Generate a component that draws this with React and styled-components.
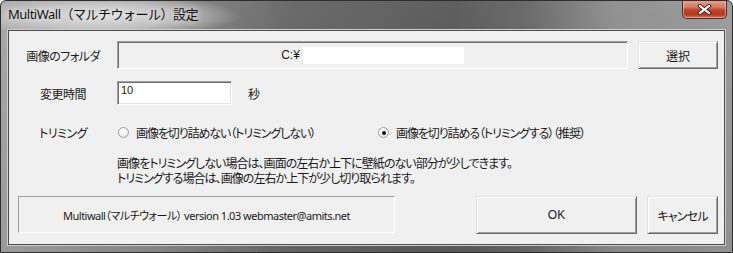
import React from 'react'
import styled, { createGlobalStyle } from 'styled-components';

const GlobalStyle = createGlobalStyle`
  body {
    margin: 0;
    background: #ffffff;
  }
`;

const jpFont = `"Liberation Sans", "Noto Sans CJK JP", sans-serif`;

const App = () => {
  return (
    <>
      <GlobalStyle />
      <Window>
        <TitleBar>
          <Title>MultiWall（マルチウォール）設定</Title>
          <CloseButton>
            <svg width="15" height="11" viewBox="0 0 15 11">
              <path d="M3 2 L12 9 M12 2 L3 9" stroke="#3a1a14" strokeWidth="4" strokeLinecap="square" />
              <path d="M3 2 L12 9 M12 2 L3 9" stroke="#ffffff" strokeWidth="2.2" strokeLinecap="square" />
            </svg>
          </CloseButton>
        </TitleBar>
        <Client>
          <Row $top={10}>
            <Label>画像のフォルダ</Label>
            <FolderField>
              <span>C:¥</span>
              <Blank />
            </FolderField>
            <Button $width={80} $height={28}>選択</Button>
          </Row>
          <Row $top={12}>
            <Label>変更時間</Label>
            <TextInput>10</TextInput>
            <Unit>秒</Unit>
          </Row>
          <Row $top={19}>
            <Label>トリミング</Label>
            <RadioOption $width={260}>
              <Radio />
              画像を切り詰めない（トリミングしない）
            </RadioOption>
            <RadioOption>
              <Radio $checked />
              画像を切り詰める（トリミングする）（推奨）
            </RadioOption>
          </Row>
          <Note>
            画像をトリミングしない場合は、画面の左右か上下に壁紙のない部分が少しできます。<br />
            トリミングする場合は、画像の左右か上下が少し切り取られます。
          </Note>
          <Footer>
            <Status>Multiwall（マルチウォール） version 1.03 webmaster@amits.net</Status>
            <Button $width={161} $height={38} $left="auto">OK</Button>
            <Button $width={71} $height={38} $left="10px" $spacing={-0.8}>キャンセル</Button>
          </Footer>
        </Client>
      </Window>
    </>
  )
}

export default App;

const Window = styled.div`
  width: 733px;
  height: 253px;
  box-sizing: border-box;
  border: 1px solid #2e2e2e;
  border-radius: 6px 6px 0 0;
  background:
    linear-gradient(to bottom, rgba(255,255,255,0) 0, rgba(0,0,0,0.08) 100%),
    linear-gradient(to right, #a8a8a8 0%, #8e8e8e 22%, #6a6a6a 40%, #5e5e5e 62%, #6c6c6c 72%, #929292 84%, #9c9c9c 100%);
  display: flex;
  flex-direction: column;
  overflow: hidden;
`;

const TitleBar = styled.div`
  height: 28px;
  display: flex;
  align-items: center;
  padding-left: 7px;
  background: radial-gradient(ellipse 140px 22px at 100px 15px, rgba(225,225,225,0.95) 0%, rgba(215,215,215,0.7) 55%, rgba(200,200,200,0) 100%);
`;

const Title = styled.div`
  font-family: "Noto Sans", "Noto Sans CJK JP", sans-serif;
  font-size: 13px;
  color: #111;
  letter-spacing: -0.5px;
  margin-top: -3px;
  text-shadow: 0 0 6px rgba(255,255,255,0.9);
`;

const CloseButton = styled.div`
  align-self: flex-start;
  margin-left: auto;
  margin-right: 5px;
  margin-top: -1px;
  width: 45px;
  height: 19px;
  box-sizing: border-box;
  border: 1px solid #4a2a25;
  border-top: none;
  border-radius: 0 0 5px 5px;
  background: linear-gradient(to bottom, #e6a596 0%, #d47a66 40%, #c2452b 55%, #b8391f 80%, #d0705a 100%);
  box-shadow: inset 0 0 0 1px rgba(255,220,210,0.5);
  display: flex;
  align-items: center;
  justify-content: center;
`;

const Client = styled.div`
  flex: 1;
  margin: 1px 7px 7px 7px;
  border: 1px solid #4c4c4c;
  box-shadow: 0 0 0 1px #cfcfcf;
  background: #f0f0f0;
  display: flex;
  flex-direction: column;
  padding-right: 6px;
  font-family: ${jpFont};
  font-size: 12px;
  font-feature-settings: "palt";
  color: #1a1a1a;
`;

const Row = styled.div`
  display: flex;
  align-items: center;
  margin-top: ${p => p.$top}px;
`;

const Label = styled.div`
  width: 108px;
  flex: none;
  text-align: center;
  font-size: 12px;
  letter-spacing: -0.5px;
`;

const FolderField = styled.div`
  flex: 1;
  height: 28px;
  box-sizing: border-box;
  border: 1px solid;
  border-color: #a0a0a0 #ffffff #ffffff #a0a0a0;
  box-shadow: inset 1px 1px 0 #6e6e6e;
  display: flex;
  align-items: center;
  justify-content: center;
  font-size: 12px;
  margin-right: 10px;
`;

const Blank = styled.span`
  width: 161px;
  height: 17px;
  margin-left: 3px;
  background: #ffffff;
`;

const Button = styled.div`
  width: ${p => p.$width}px;
  height: ${p => p.$height}px;
  margin-left: ${p => p.$left || '0'};
  flex: none;
  box-sizing: border-box;
  border: 1px solid;
  border-color: #e2e2e2 #696969 #696969 #e2e2e2;
  box-shadow: inset 1px 1px 0 #ffffff, inset -1px -1px 0 #a0a0a0;
  background: #f0f0f0;
  display: flex;
  align-items: center;
  justify-content: center;
  font-size: 12px;
  letter-spacing: ${p => p.$spacing || 0}px;
`;

const TextInput = styled.div`
  width: 115px;
  height: 24px;
  box-sizing: border-box;
  border: 1px solid;
  border-color: #a0a0a0 #ffffff #ffffff #a0a0a0;
  box-shadow: inset 1px 1px 0 #6e6e6e, inset -1px -1px 0 #e3e3e3;
  background: #ffffff;
  padding: 2px 0 0 3px;
  font-size: 11px;
`;

const Unit = styled.div`
  margin-left: 16px;
  font-size: 12px;
`;

const RadioOption = styled.div`
  width: ${p => (p.$width ? `${p.$width}px` : 'auto')};
  display: flex;
  align-items: center;
  gap: 4px;
  font-size: 12px;
  letter-spacing: -1.1px;
`;

const Radio = styled.span`
  width: 11px;
  height: 11px;
  box-sizing: border-box;
  border-radius: 50%;
  border: 1px solid #a0a0a0;
  background: radial-gradient(circle at 40% 35%, #ffffff 0%, #eaeaea 70%, #d8d8d8 100%);
  margin-left: 1px;
  margin-right: 3px;
  display: flex;
  align-items: center;
  justify-content: center;
  &::after {
    content: "";
    width: 4px;
    height: 4px;
    border-radius: 50%;
    background: ${p => (p.$checked ? '#111' : 'transparent')};
  }
`;

const Note = styled.div`
  margin: 16px 0 0 108px;
  font-size: 12px;
  line-height: 15px;
  letter-spacing: -0.95px;
`;

const Footer = styled.div`
  display: flex;
  align-items: flex-start;
  margin-top: 9px;
  padding-left: 9px;
`;

const Status = styled.div`
  width: 377px;
  height: 37px;
  box-sizing: border-box;
  border: 1px solid;
  border-color: #a0a0a0 #ffffff #ffffff #a0a0a0;
  display: flex;
  align-items: center;
  justify-content: center;
  font-family: "Noto Sans", "Noto Sans CJK JP", sans-serif;
  font-size: 11px;
  letter-spacing: -0.5px;
`;
